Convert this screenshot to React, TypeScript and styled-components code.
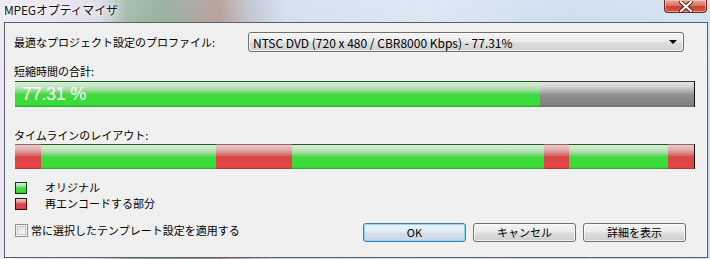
import React from "react";
import styled, { createGlobalStyle } from "styled-components";

const Global = createGlobalStyle`
  html, body { margin: 0; padding: 0; background: #c6d6e8; }
  body { width: 710px; height: 259px; overflow: hidden; }
`;

const FONT = `"Noto Sans CJK JP", "Noto Sans", sans-serif`;

const Window = styled.div`
  width: 710px;
  height: 259px;
  box-sizing: border-box;
  display: flex;
  flex-direction: column;
  padding: 0 2px 1px 4px;
  font-family: ${FONT};
  background:
    linear-gradient(180deg, rgba(255,255,255,0.25) 0%, rgba(255,255,255,0) 40%),
    linear-gradient(90deg, #ece6f4 0%, #e2daf0 10%, #d4d6e6 14%, #8eab95 18%, #7d9c88 23%, #94928a 27%, #a48a80 31%, #b2b6c4 35%, #c8d8ea 40%, #d2e0ee 60%, #c2d6ea 80%, #cadcee 100%);
`;

const TitleBar = styled.div`
  height: 22px;
  display: flex;
  align-items: flex-start;
  justify-content: space-between;
`;

const Title = styled.div`
  font-size: 12px;
  line-height: 14px;
  margin-top: 3px;
  color: #111;
  text-shadow: 0 0 6px rgba(255,255,255,0.9), 0 0 3px rgba(255,255,255,0.9);
  letter-spacing: -0.2px;
`;

const CloseButton = styled.div`
  width: 43px;
  height: 13px;
  margin-right: 1px;
  box-sizing: border-box;
  border: 1px solid #6b2a22;
  border-top: none;
  border-radius: 0 0 4px 4px;
  background: linear-gradient(180deg, #e8a69a 0%, #d9786a 45%, #c8402e 55%, #d65a44 100%);
  box-shadow: inset 0 0 0 1px rgba(255,220,210,0.5);
  display: flex;
  align-items: center;
  justify-content: center;
`;

const Client = styled.div`
  flex: 1;
  box-sizing: border-box;
  border: 1px solid #5c5f66;
  background: #f0f0f0;
  padding: 9px 12px 0 9px;
  display: flex;
  flex-direction: column;
  font-size: 11px;
  color: #000;
`;

const ProfileRow = styled.div`
  display: flex;
  align-items: center;
  height: 20px;
`;

const Label = styled.div<{ $mt?: number }>`
  font-size: 11px;
  line-height: 13px;
  margin-top: ${(p) => p.$mt ?? 0}px;
  white-space: nowrap;
`;

const ProfileLabel = styled(Label)`
  width: 234px;
`;

const Combo = styled.div`
  box-sizing: border-box;
  width: 436px;
  height: 20px;
  border: 1px solid #707070;
  border-radius: 3px;
  background: linear-gradient(180deg, #f4f4f4 0%, #ececec 48%, #dedede 52%, #d2d2d2 100%);
  box-shadow: inset 0 0 0 1px rgba(255,255,255,0.7);
  display: flex;
  align-items: center;
  justify-content: space-between;
  padding: 0 5px 0 4px;
  font-size: 12px;
  white-space: nowrap;
`;

const Arrow = styled.div`
  width: 0;
  height: 0;
  border-left: 4px solid transparent;
  border-right: 4px solid transparent;
  border-top: 4px solid #000;
  margin-right: 1px;
`;

const Bar = styled.div<{ $mt: number; $h: number }>`
  display: flex;
  position: relative;
  height: ${(p) => p.$h}px;
  margin-top: ${(p) => p.$mt}px;
  margin-left: 1px;
  width: 680px;
  box-sizing: border-box;
  border-right: 1px solid #111;
`;

const GREEN = `linear-gradient(180deg, #d6ecd6 0%, #c4e6c4 18%, #a4dea4 30%, #78d478 42%, #3cdc3c 50%, #38dc38 92%, #2a9e2a 100%)`;
const RED = `linear-gradient(180deg, #e8cccc 0%, #e0b2b2 18%, #da8c8c 32%, #d86262 44%, #d84444 52%, #e84646 92%, #a83030 100%)`;
const GRAY = `linear-gradient(180deg, #e6e6e6 0%, #d2d2d2 20%, #b0b0b0 36%, #8e8e8e 52%, #808080 92%, #6a6a6a 100%)`;

const Segment = styled.div<{ $kind: "green" | "red" | "gray" }>`
  height: 100%;
  box-sizing: border-box;
  border-top: 1px solid
    ${(p) => (p.$kind === "green" ? "#1c5e1c" : p.$kind === "red" ? "#9a6060" : "#3a3a3a")};
  background: ${(p) => (p.$kind === "green" ? GREEN : p.$kind === "red" ? RED : GRAY)};
`;

const Percent = styled.div`
  position: absolute;
  left: 7px;
  top: 3px;
  font-family: "Liberation Sans", Arial, sans-serif;
  font-size: 18px;
  line-height: 20px;
  color: #fff;
  letter-spacing: -0.3px;
`;

const Legend = styled.div`
  display: flex;
  flex-direction: column;
  gap: 3px;
  margin-top: 12px;
`;

const LegendRow = styled.div`
  display: flex;
  align-items: center;
  height: 13px;
`;

const Swatch = styled.div<{ $kind: "green" | "red" }>`
  width: 12px;
  height: 12px;
  box-sizing: border-box;
  margin-left: 1px;
  margin-right: 18px;
  border: 1px solid ${(p) => (p.$kind === "green" ? "#0e3a0e" : "#3a0e0e")};
  background: ${(p) => (p.$kind === "green" ? GREEN : RED)};
`;

const BottomRow = styled.div`
  display: flex;
  align-items: flex-start;
  justify-content: space-between;
  margin-top: 13px;
  padding-right: 9px;
`;

const CheckWrap = styled.label`
  display: flex;
  align-items: center;
  gap: 3px;
  height: 14px;
  margin-left: 1px;
  white-space: nowrap;
`;

const CheckBox = styled.span`
  width: 13px;
  height: 13px;
  box-sizing: border-box;
  border: 1px solid #8e8f8f;
  background: linear-gradient(135deg, #dcdcdc 0%, #f4f4f4 70%, #ffffff 100%);
  box-shadow: inset 0 0 0 1px #f4f4f4, inset 0 0 0 2px #c8c8c8;
`;

const Buttons = styled.div`
  display: flex;
  gap: 7px;
`;

const Button = styled.div<{ $default?: boolean }>`
  width: 103px;
  height: 19px;
  box-sizing: border-box;
  border: 1px solid ${(p) => (p.$default ? "#3c7fb1" : "#707070")};
  border-radius: 3px;
  background: ${(p) =>
    p.$default
      ? "linear-gradient(180deg, #eaf2f8 0%, #e2ecf4 48%, #d2e0ec 52%, #c8d8e6 100%)"
      : "linear-gradient(180deg, #f4f4f4 0%, #ebebeb 48%, #dddddd 52%, #cfcfcf 100%)"};
  box-shadow: inset 0 0 0 1px ${(p) => (p.$default ? "#8fd6f4" : "rgba(255,255,255,0.75)")};
  display: flex;
  align-items: center;
  justify-content: center;
  font-size: 11px;
  line-height: 13px;
`;

const segments: { kind: "green" | "red"; w: number }[] = [
  { kind: "red", w: 26 },
  { kind: "green", w: 175 },
  { kind: "red", w: 76 },
  { kind: "green", w: 252 },
  { kind: "red", w: 25 },
  { kind: "green", w: 99 },
  { kind: "red", w: 26 },
];

export default function App() {
  return (
    <>
      <Global />
      <Window>
        <TitleBar>
          <Title>MPEGオプティマイザ</Title>
          <CloseButton>
            <svg width="14" height="11" viewBox="0 0 14 11">
              <path d="M2 1 L12 10 M12 1 L2 10" stroke="#5a2a24" strokeWidth="4" strokeLinecap="square" />
              <path d="M2 1 L12 10 M12 1 L2 10" stroke="#ffffff" strokeWidth="2" strokeLinecap="square" />
            </svg>
          </CloseButton>
        </TitleBar>
        <Client>
          <ProfileRow>
            <ProfileLabel>最適なプロジェクト設定のプロファイル:</ProfileLabel>
            <Combo>
              <span>NTSC DVD (720 x 480 / CBR8000 Kbps) - 77.31%</span>
              <Arrow />
            </Combo>
          </ProfileRow>
          <Label $mt={13}>短縮時間の合計:</Label>
          <Bar $mt={3} $h={26}>
            <Segment $kind="green" style={{ width: "77.31%" }} />
            <Segment $kind="gray" style={{ flex: 1 }} />
            <Percent>77.31 %</Percent>
          </Bar>
          <Label $mt={22}>タイムラインのレイアウト:</Label>
          <Bar $mt={2} $h={25}>
            {segments.map((s, i) => (
              <Segment key={i} $kind={s.kind} style={{ width: s.w }} />
            ))}
          </Bar>
          <Legend>
            <LegendRow>
              <Swatch $kind="green" />
              <Label>オリジナル</Label>
            </LegendRow>
            <LegendRow>
              <Swatch $kind="red" />
              <Label>再エンコードする部分</Label>
            </LegendRow>
          </Legend>
          <BottomRow>
            <CheckWrap>
              <CheckBox />
              <Label>常に選択したテンプレート設定を適用する</Label>
            </CheckWrap>
            <Buttons>
              <Button $default>OK</Button>
              <Button>キャンセル</Button>
              <Button>詳細を表示</Button>
            </Buttons>
          </BottomRow>
        </Client>
      </Window>
    </>
  );
}
